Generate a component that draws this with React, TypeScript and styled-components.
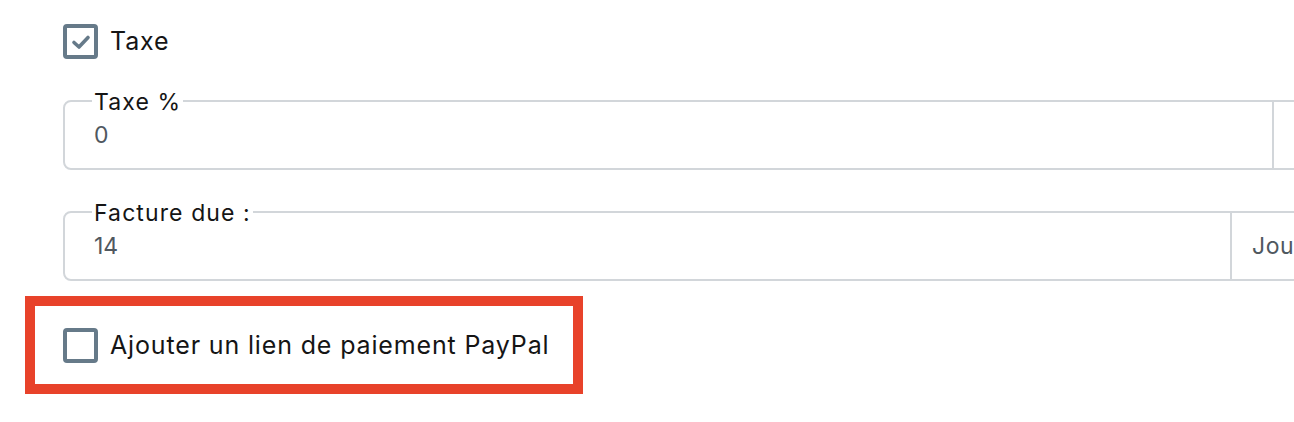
import React from "react";
import styled, { createGlobalStyle } from "styled-components";

const Global = createGlobalStyle`
  html, body { margin: 0; padding: 0; background: #ffffff; overflow: hidden; }
  body { font-family: Inter, "Noto Sans", "Liberation Sans", sans-serif; color: #151515; }
`;

const Page = styled.div`
  width: 1294px;
  height: 422px;
  overflow: hidden;
  box-sizing: border-box;
  padding: 24px 0 0 63px;
  display: flex;
  flex-direction: column;
`;

const CheckRow = styled.label`
  display: flex;
  align-items: center;
  gap: 12px;
  font-size: 25px;
  line-height: 35px;
  color: #151515;
  letter-spacing: 0.85px;
  white-space: nowrap;
`;

const Box = styled.span`
  box-sizing: border-box;
  width: 35px;
  height: 35px;
  border: 4px solid #667a89;
  border-radius: 4px;
  display: flex;
  align-items: center;
  justify-content: center;
  flex: none;
`;

const Field = styled.div<{ $mt: number }>`
  position: relative;
  margin-top: ${(p) => p.$mt}px;
  box-sizing: border-box;
  width: 1267px;
  flex: none;
  height: 70px;
  border: 2px solid #d2d6da;
  border-radius: 8px;
  display: flex;
  align-items: stretch;
`;

const Legend = styled.span`
  position: absolute;
  top: -13px;
  left: 27px;
  padding: 0 2px;
  background: #ffffff;
  font-size: 23px;
  line-height: 26px;
  color: #151515;
  letter-spacing: 1.1px;
  white-space: nowrap;
`;

const Value = styled.div`
  flex: 1;
  padding: 20px 0 0 29px;
  font-size: 23px;
  line-height: 26px;
  color: #50585f;
`;

const Adornment = styled.div<{ $w: number }>`
  width: ${(p) => p.$w}px;
  flex: none;
  box-sizing: border-box;
  border-left: 2px solid #d2d6da;
  padding-left: 20px;
  display: flex;
  align-items: center;
  font-size: 23px;
  color: #50585f;
  letter-spacing: 0.5px;
`;

const Highlight = styled.div`
  margin: 15px 0 0 -38px;
  width: 558px;
  height: 98px;
  flex: none;
  box-sizing: border-box;
  border: 10px solid #e8422a;
  padding: 0 0 0 28px;
  display: flex;
  align-items: center;
`;

const Check = () => (
  <svg width="20" height="16" viewBox="0 0 20 16">
    <path d="M3 8.5 L8 13 L17 3.5" fill="none" stroke="#667a89" strokeWidth="3.6" strokeLinecap="round" strokeLinejoin="round" />
  </svg>
);

export default function App() {
  return (
    <>
      <Global />
      <Page>
        <CheckRow>
          <Box>
            <Check />
          </Box>
          Taxe
        </CheckRow>
        <Field $mt={41}>
          <Legend>Taxe %</Legend>
          <Value>0</Value>
          <Adornment $w={56} />
        </Field>
        <Field $mt={41}>
          <Legend>Facture due :</Legend>
          <Value>14</Value>
          <Adornment $w={98}>Jours</Adornment>
        </Field>
        <Highlight>
          <CheckRow>
            <Box />
            Ajouter un lien de paiement PayPal
          </CheckRow>
        </Highlight>
      </Page>
    </>
  );
}
